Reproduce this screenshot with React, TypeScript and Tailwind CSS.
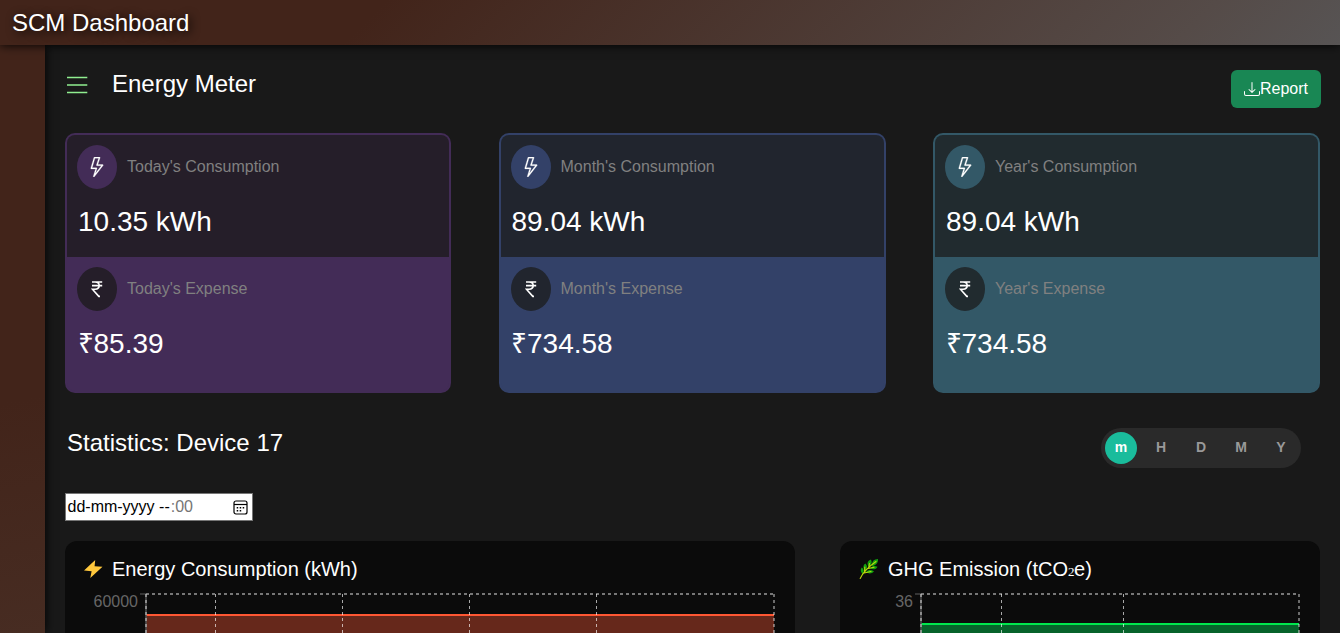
import React from "react";
import { BsLightning, BsDownload } from "react-icons/bs";

type Meter = {
  period: string;
  energy: string;
  cost: string;
  strong: string;
  dark: string;
  border: string;
};

const meters: Meter[] = [
  { period: "Today's", energy: "10.35 kWh", cost: "₹85.39", strong: "bg-[#432c57]", dark: "bg-[#251e29]", border: "border-[#432c57]" },
  { period: "Month's", energy: "89.04 kWh", cost: "₹734.58", strong: "bg-[#334168]", dark: "bg-[#21252e]", border: "border-[#334168]" },
  { period: "Year's", energy: "89.04 kWh", cost: "₹734.58", strong: "bg-[#335867]", dark: "bg-[#212b2f]", border: "border-[#335867]" },
];

function RupeeIcon() {
  return (
    <svg width="12" height="18" viewBox="0 0 12 18" fill="none" stroke="currentColor" strokeWidth="1.6">
      <path d="M1 2 H11.2 M1 5.6 H11.2 M1 2 H4 C9.6 2 9.6 9.2 4 9.2 H1.4 L7.8 16.4 H9" />
    </svg>
  );
}

function MeterCard({ m }: { m: Meter }) {
  return (
    <div className={`h-[260px] overflow-hidden rounded-[10px] border-2 ${m.border} ${m.strong}`}>
      <div className={`h-[122px] px-[10px] pt-[10px] ${m.dark}`}>
        <div className="flex items-center gap-[10px]">
          <span className={`flex h-11 w-10 items-center justify-center rounded-[50%] ${m.strong}`}>
            <BsLightning size={20} strokeWidth={0.2} />
          </span>
          <span className="text-base text-[#808080]">{m.period} Consumption</span>
        </div>
        <div className="mt-4 pl-[1px] text-[28px] leading-[34px]">{m.energy}</div>
      </div>
      <div className="px-[10px] pt-[10px]">
        <div className="flex items-center gap-[10px]">
          <span className={`flex h-11 w-10 items-center justify-center rounded-[50%] ${m.dark}`}>
            <RupeeIcon />
          </span>
          <span className="text-base text-[#808080]">{m.period} Expense</span>
        </div>
        <div className="mt-4 pl-[0.5px] text-[28px] leading-[34px]">{m.cost}</div>
      </div>
    </div>
  );
}

type ChartProps = {
  width: number;
  left: number;
  right: number;
  grid: number[];
  label: string;
  level: number;
  stroke: string;
  fill: string;
};

function Chart({ width, left, right, grid, label, level, stroke, fill }: ChartProps) {
  return (
    <svg width={width} height="140" className="block">
      <text x={left - 8} y="22" textAnchor="end" fill="#666" fontSize="16">{label}</text>
      <rect x={left} y={level} width={right - left} height="140" fill={fill} />
      <line x1={left} x2={right} y1={level} y2={level} stroke={stroke} strokeWidth="2" />
      <line x1={left - 6} x2={left} y1="9" y2="9" stroke="#444" strokeWidth="1.5" />
      <line x1={left} x2={left} y1="9" y2="140" stroke="#555" strokeWidth="1.5" />
      <line x1={left} x2={right} y1="9" y2="9" stroke="#777" strokeWidth="2" strokeDasharray="3 3" />
      {[left, right].map((x) => (
        <line key={x} x1={x} x2={x} y1="9" y2="140" stroke="#fff" strokeOpacity="0.4" strokeWidth="2" strokeDasharray="3 3" />
      ))}
      {grid.map((x) => (
        <line key={x} x1={x} x2={x} y1="9" y2="140" stroke="#fff" strokeOpacity="0.65" strokeWidth="1" strokeDasharray="3 3" />
      ))}
    </svg>
  );
}

function BoltIcon() {
  return (
    <svg width="20" height="20" viewBox="0 0 20 20">
      <path d="M12.2 1 L1 11.5 L8.6 12.3 L7.3 19 L19.5 7.8 L11.6 7.3 Z" fill="#ffc83d" />
    </svg>
  );
}

function HerbIcon() {
  return (
    <svg width="20" height="22" viewBox="0 0 20 22">
      <g fill="#13a10e">
        <path d="M13 7 C13 3 15 1.2 19 1 C19.3 5 17 7.5 13 8 Z" />
        <path d="M9.5 8.5 C7.5 5 9 2.5 12 1.5 C13.5 4.5 12.5 7 9.5 9 Z" />
        <path d="M5.8 12.5 C3.5 9.5 4.5 6.5 6.5 5.5 C8.8 8 8.5 10.5 6 13 Z" />
        <path d="M3.5 16 C1.2 13.5 1.5 11 2.8 9.5 C5 11 5.5 13.5 3.7 16 Z" />
        <path d="M11.5 9.5 C13 7.5 16 7.5 18.5 8.7 C17 11.5 14 12 11.3 10.3 Z" />
        <path d="M7.5 13.5 C9.5 11.5 12 11.5 15 13.3 C13 16 9.5 16 7.2 14.3 Z" />
      </g>
      <path d="M1.2 20.5 C3.5 15.5 8.5 9.5 17 3.5 M5.5 14.5 L5.8 9 M9.5 10.5 L10.5 5.5 M5 15 L12 13.5 M9.5 10.5 L15 9.3" fill="none" stroke="#bad80a" strokeWidth="1.1" strokeLinecap="round" />
    </svg>
  );
}

function CalendarIcon() {
  return (
    <svg width="15" height="15" viewBox="0 0 15 15" fill="none" stroke="#000">
      <rect x="1" y="1" width="13" height="13" rx="2" strokeWidth="1.2" />
      <path d="M1 4.5 H14" strokeWidth="1.2" />
      <path d="M6.7 7.7 H8.2 M9.7 7.7 H11.2 M3.7 10.7 H5.2 M6.7 10.7 H8.2 M3.7 7.7 H5.2" strokeWidth="1.5" />
    </svg>
  );
}

export default function App() {
  return (
    <div className="flex h-[633px] w-[1340px] flex-col overflow-hidden bg-[#191919] font-['Liberation_Sans',Arial,sans-serif] text-white">
      <header className="z-10 h-[45px] shrink-0 bg-[linear-gradient(135deg,#42241a_0%,#42241a_28%,#554b48_88%,#575454_100%)] pl-3 shadow-[0_0_10px_#000]">
        <h1 className="text-2xl leading-[45px] [text-shadow:2px_2px_10px_#000]">SCM Dashboard</h1>
      </header>
      <div className="flex min-h-0 flex-1">
        <aside className="w-[45px] shrink-0 bg-[linear-gradient(170deg,#42241a_0%,#42241a_60%,#472c22_100%)] shadow-[0_0_10px_#000]" />
        <main className="min-w-0 flex-1 pl-5 pr-5">
          <div className="mr-[-1px] mt-[25px] flex h-[38px] items-center justify-between">
            <div className="mt-[-8px] flex items-center gap-6">
              <svg width="24" height="20" viewBox="0 0 24 20" stroke="#90ee90" strokeWidth="1.6">
                <path d="M2 2.5 H22.3 M2 10 H22.3 M2 17.5 H22.3" />
              </svg>
              <h2 className="ml-[-1px] mt-[-2px] text-2xl leading-7">Energy Meter</h2>
            </div>
            <button className="flex h-[38px] w-[90px] items-center justify-center rounded-md bg-[#198754] text-base">
              <BsDownload size={16} />
              Report
            </button>
          </div>
          <section className="mt-[25px] grid grid-cols-[386px_387px_387px] justify-between">
            {meters.map((m) => <MeterCard key={m.period} m={m} />)}
          </section>
          <div className="mt-[35px] flex h-10 items-center justify-between pl-[2px] pr-[19px]">
            <h2 className="mt-[-10px] text-2xl leading-7">Statistics: Device 17</h2>
            <div className="flex h-10 w-[200px] items-center rounded-full bg-[#2a2a2a] text-sm font-bold text-[#999]">
              <span className="mx-1 flex h-8 w-8 items-center justify-center rounded-full bg-[#1abc9c] pb-[2px] text-white">m</span>
              {["H", "D", "M", "Y"].map((t) => <span key={t} className="w-10 pb-[2px] text-center">{t}</span>)}
            </div>
          </div>
          <div className="mt-[25px] flex h-7 w-[188px] items-center justify-between border border-[#767676] bg-white pl-[1.5px] pr-1 text-base text-black">
            <span>dd-mm-yyyy --<span className="ml-px text-[#757575]">:00</span></span>
            <CalendarIcon />
          </div>
          <div className="mt-5 flex justify-between">
            <section className="h-[400px] w-[730px] rounded-xl bg-[#0b0b0b] pt-4">
              <h3 className="flex h-6 items-center gap-[9px] pl-[18px] text-xl"><BoltIcon />Energy Consumption (kWh)</h3>
              <div className="mt-1">
                <Chart width={730} left={81} right={709} grid={[150.5, 277.5, 404.5, 531.5]} label="60000" level={30} stroke="#ff5733" fill="#66281b" />
              </div>
            </section>
            <section className="h-[400px] w-[480px] rounded-xl bg-[#0b0b0b] pt-4">
              <h3 className="flex h-6 items-center gap-[9px] pl-[19px] text-xl"><HerbIcon /><span>GHG Emission (tCO<span className="inline-block w-[6px] font-['Liberation_Serif',serif] text-[13px] leading-none">2</span>e)</span></h3>
              <div className="mt-1">
                <Chart width={480} left={81} right={459} grid={[161.5, 283.5]} label="36" level={39} stroke="#00e64d" fill="#07632b" />
              </div>
            </section>
          </div>
        </main>
      </div>
    </div>
  );
}
